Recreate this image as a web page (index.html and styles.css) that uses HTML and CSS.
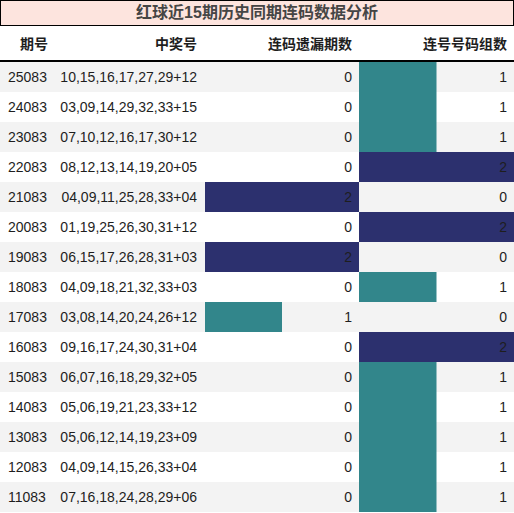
FILE: index.html
```html
<!DOCTYPE html>
<html lang="zh-CN">
<head>
  <meta charset="UTF-8">
  <title>红球近15期历史同期连码数据分析</title>
  <link rel="stylesheet" href="styles.css">
</head>
<body>
  <div class="report">
    <div class="title">红球近15期历史同期连码数据分析</div>

    <div class="row head">
      <div class="cell c-issue">期号</div>
      <div class="cell c-nums">中奖号</div>
      <div class="cell c-gap">连码遗漏期数</div>
      <div class="cell c-group">连号号码组数</div>
    </div>

    <div class="row">
      <div class="cell c-issue">25083</div>
      <div class="cell c-nums">10,15,16,17,27,29+12</div>
      <div class="cell c-gap">0</div>
      <div class="cell c-group bar-1">1</div>
    </div>
    <div class="row">
      <div class="cell c-issue">24083</div>
      <div class="cell c-nums">03,09,14,29,32,33+15</div>
      <div class="cell c-gap">0</div>
      <div class="cell c-group bar-1">1</div>
    </div>
    <div class="row">
      <div class="cell c-issue">23083</div>
      <div class="cell c-nums">07,10,12,16,17,30+12</div>
      <div class="cell c-gap">0</div>
      <div class="cell c-group bar-1">1</div>
    </div>
    <div class="row">
      <div class="cell c-issue">22083</div>
      <div class="cell c-nums">08,12,13,14,19,20+05</div>
      <div class="cell c-gap">0</div>
      <div class="cell c-group bar-2">2</div>
    </div>
    <div class="row">
      <div class="cell c-issue">21083</div>
      <div class="cell c-nums">04,09,11,25,28,33+04</div>
      <div class="cell c-gap bar-2">2</div>
      <div class="cell c-group">0</div>
    </div>
    <div class="row">
      <div class="cell c-issue">20083</div>
      <div class="cell c-nums">01,19,25,26,30,31+12</div>
      <div class="cell c-gap">0</div>
      <div class="cell c-group bar-2">2</div>
    </div>
    <div class="row">
      <div class="cell c-issue">19083</div>
      <div class="cell c-nums">06,15,17,26,28,31+03</div>
      <div class="cell c-gap bar-2">2</div>
      <div class="cell c-group">0</div>
    </div>
    <div class="row">
      <div class="cell c-issue">18083</div>
      <div class="cell c-nums">04,09,18,21,32,33+03</div>
      <div class="cell c-gap">0</div>
      <div class="cell c-group bar-1">1</div>
    </div>
    <div class="row">
      <div class="cell c-issue">17083</div>
      <div class="cell c-nums">03,08,14,20,24,26+12</div>
      <div class="cell c-gap bar-1">1</div>
      <div class="cell c-group">0</div>
    </div>
    <div class="row">
      <div class="cell c-issue">16083</div>
      <div class="cell c-nums">09,16,17,24,30,31+04</div>
      <div class="cell c-gap">0</div>
      <div class="cell c-group bar-2">2</div>
    </div>
    <div class="row">
      <div class="cell c-issue">15083</div>
      <div class="cell c-nums">06,07,16,18,29,32+05</div>
      <div class="cell c-gap">0</div>
      <div class="cell c-group bar-1">1</div>
    </div>
    <div class="row">
      <div class="cell c-issue">14083</div>
      <div class="cell c-nums">05,06,19,21,23,33+12</div>
      <div class="cell c-gap">0</div>
      <div class="cell c-group bar-1">1</div>
    </div>
    <div class="row">
      <div class="cell c-issue">13083</div>
      <div class="cell c-nums">05,06,12,14,19,23+09</div>
      <div class="cell c-gap">0</div>
      <div class="cell c-group bar-1">1</div>
    </div>
    <div class="row">
      <div class="cell c-issue">12083</div>
      <div class="cell c-nums">04,09,14,15,26,33+04</div>
      <div class="cell c-gap">0</div>
      <div class="cell c-group bar-1">1</div>
    </div>
    <div class="row">
      <div class="cell c-issue">11083</div>
      <div class="cell c-nums">07,16,18,24,28,29+06</div>
      <div class="cell c-gap">0</div>
      <div class="cell c-group bar-1">1</div>
    </div>
  </div>
</body>
</html>
```

FILE: styles.css
```css
:root {
  --color-title-bg: #fde4de;
  --color-title-text: #454545;
  --color-text: #1e1e1e;
  --color-stripe: #f3f3f3;
  --color-teal: #32868b;
  --color-navy: #2c306e;
}

* {
  margin: 0;
  padding: 0;
  box-sizing: border-box;
}

body {
  background: #ffffff;
  color: var(--color-text);
  font-family: 'Liberation Sans', Arial, 'Noto Sans CJK SC', sans-serif;
  font-size: 14px;
}

.report {
  width: 514px;
}

.title {
  height: 26px;
  line-height: 24px;
  border: 1px solid #000000;
  background-color: var(--color-title-bg);
  color: var(--color-title-text);
  font-size: 16px;
  font-weight: 700;
  text-align: center;
}

.row {
  display: grid;
  grid-template-columns: 53px 152px 154px 155px;
  height: 30px;
}

.row:nth-child(odd) {
  background-color: var(--color-stripe);
}

.row.head {
  height: 36px;
  background-color: #ffffff;
  border-bottom: 2px solid #000000;
  font-weight: 700;
}

.cell {
  display: flex;
  align-items: center;
  padding: 0 7px;
  white-space: nowrap;
  background-repeat: no-repeat;
}

.c-issue {
  padding-left: 8px;
}

.head .c-issue {
  padding-left: 20px;
}

.c-nums,
.c-gap,
.c-group {
  justify-content: flex-end;
}

.c-nums {
  padding-right: 8px;
}

.bar-1 {
  background-image: linear-gradient(var(--color-teal), var(--color-teal));
  background-size: 50% 100%;
}

.bar-2 {
  background-image: linear-gradient(var(--color-navy), var(--color-navy));
  background-size: 100% 100%;
}
```
